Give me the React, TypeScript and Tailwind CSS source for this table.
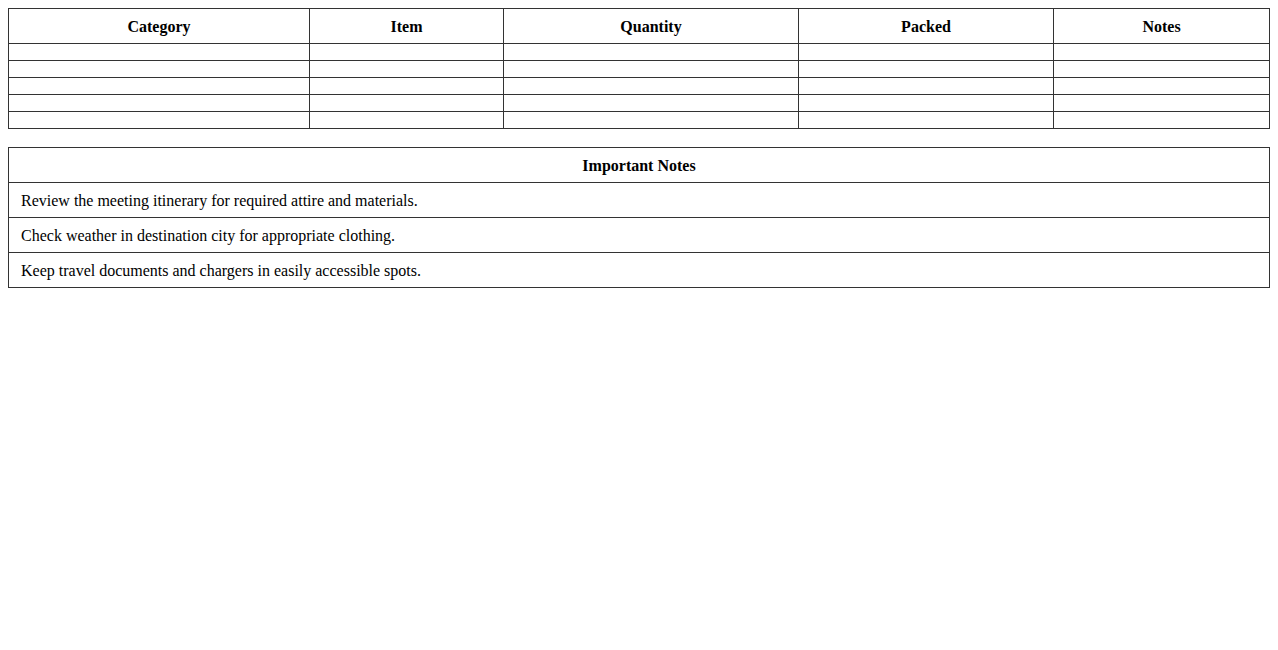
import React from 'react';

const columns = [
  { name: 'Category', width: 'w-[301px]' },
  { name: 'Item', width: 'w-[194px]' },
  { name: 'Quantity', width: 'w-[295px]' },
  { name: 'Packed', width: 'w-[255px]' },
  { name: 'Notes', width: 'w-[216px]' },
];

const notes = [
  'Review the meeting itinerary for required attire and materials.',
  'Check weather in destination city for appropriate clothing.',
  'Keep travel documents and chargers in easily accessible spots.',
];

const App: React.FC = () => {
  return (
    <div className="p-2 bg-white text-black font-['Liberation_Serif',serif] text-[16px] leading-[18px]">
      <table className="w-full border-collapse table-fixed">
        <thead>
          <tr>
            {columns.map((col) => (
              <th
                key={col.name}
                className={`${col.width} border border-[#333] px-2 pt-[9px] pb-[7px] text-center font-bold`}
              >
                {col.name}
              </th>
            ))}
          </tr>
        </thead>
        <tbody>
          {[0, 1, 2, 3, 4].map((row) => (
            <tr key={row}>
              {columns.map((col) => (
                <td key={col.name} className="border border-[#333] p-2"></td>
              ))}
            </tr>
          ))}
        </tbody>
      </table>

      <table className="w-full border-collapse mt-[18px]">
        <thead>
          <tr>
            <th className="border border-[#333] px-3 pt-[9px] pb-[7px] text-center font-bold">
              Important Notes
            </th>
          </tr>
        </thead>
        <tbody>
          {notes.map((note) => (
            <tr key={note}>
              <td className="border border-[#333] px-3 pt-[9px] pb-[7px] text-left">{note}</td>
            </tr>
          ))}
        </tbody>
      </table>
    </div>
  );
};

export default App;
